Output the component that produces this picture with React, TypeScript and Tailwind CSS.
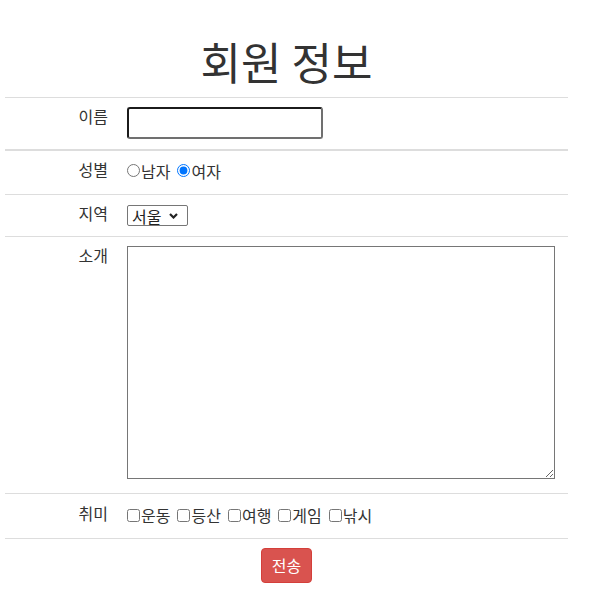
import React from "react";

export default function App() {
  const hobbies = ["운동", "등산", "여행", "게임", "낚시"];
  return (
    <div className="w-[591px] min-h-[609px] bg-white text-[#333] text-[16px] leading-[20px] font-['Noto_Sans_CJK_KR','Noto_Sans',sans-serif] pt-[37px]">
      <h1 className="w-[563px] mx-[5px] text-center text-[44px] leading-[48px] font-normal mb-[12px]">회원 정보</h1>
      <form className="w-[563px] mx-[5px]" onSubmit={(e) => e.preventDefault()}>
        <div className="flex h-[54px] border-t border-b-2 border-[#ddd]">
          <div className="w-[110px] pr-[7px] pt-[8px] text-right">이름</div>
          <div className="pl-[12px] pt-[9px]">
            <input
              type="text"
              className="block w-[196px] h-[32px] border-2 border-t-[#1b1b1b] border-l-[#1b1b1b] border-r-[#707070] border-b-[#707070] rounded-[3px] px-[4px] outline-none"
            />
          </div>
        </div>
        <div className="flex h-[44px] border-b border-[#ddd]">
          <div className="w-[110px] pr-[7px] pt-[8px] text-right">성별</div>
          <div className="pl-[12px] pt-[10px] flex items-start">
            <label className="flex items-start">
              <input type="radio" name="gender" className="m-0 mt-[3px] w-[13px] h-[13px]" />
              <span className="ml-[1px]">남자</span>
            </label>
            <label className="flex items-start ml-[7px]">
              <input type="radio" name="gender" defaultChecked className="m-0 mt-[3px] w-[13px] h-[13px]" />
              <span className="ml-[1px]">여자</span>
            </label>
          </div>
        </div>
        <div className="flex h-[42px] border-b border-[#ddd]">
          <div className="w-[110px] pr-[7px] pt-[8px] text-right">지역</div>
          <div className="pl-[12px] pt-[10px]">
            <div className="flex items-center w-[61px] h-[21px] border border-[#767676] rounded-[2px] pl-[4px]">
              <select className="appearance-none bg-transparent outline-none text-[16px] leading-[18px] text-[#222]">
                <option>서울</option>
                <option>부산</option>
                <option>대구</option>
              </select>
              <svg className="ml-auto mr-[9px]" width="9" height="6" viewBox="0 0 9 6">
                <path d="M1 1 L4.5 4.5 L8 1" fill="none" stroke="#222" strokeWidth="2.2" />
              </svg>
            </div>
          </div>
        </div>
        <div className="flex h-[257px] border-b border-[#ddd]">
          <div className="w-[110px] pr-[7px] pt-[8px] text-right">소개</div>
          <div className="pl-[12px] pt-[9px]">
            <textarea className="block w-[428px] h-[233px] border border-[#767676] outline-none p-[2px]" />
          </div>
        </div>
        <div className="flex h-[45px] border-b border-[#ddd]">
          <div className="w-[110px] pr-[7px] pt-[9px] text-right">취미</div>
          <div className="pl-[12px] pt-[11px] flex items-start">
            {hobbies.map((h, i) => (
              <label key={h} className={"flex items-start " + (i > 0 ? "ml-[7px]" : "")}>
                <input type="checkbox" className="m-0 mt-[4px] w-[13px] h-[13px]" />
                <span className="ml-[1px]">{h}</span>
              </label>
            ))}
          </div>
        </div>
        <div className="flex justify-center pt-[9px]">
          <button
            type="submit"
            className="bg-[#d9534f] border border-[#d43f3a] text-white rounded-[4px] px-[9.5px] py-[6px] text-[16px] leading-[21px]"
          >
            전송
          </button>
        </div>
      </form>
    </div>
  );
}
